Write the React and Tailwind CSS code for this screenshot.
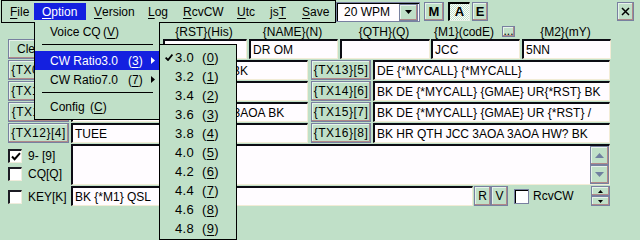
import React from 'react';

const raised =
  'border border-[#7880a0] shadow-[inset_-1px_-1px_0_#b08888,inset_1px_1px_0_#e6f3ea] bg-[#c0e0c8]';
const sunken =
  'bg-[#fffcff] border-t-2 border-l-2 border-r border-b border-t-[#0c0c14] border-l-[#0c0c14] border-r-[#f2ecd6] border-b-[#f2ecd6]';

const Btn = ({ className = '', children }) => (
  <div className={`${raised} flex shrink-0 items-center justify-center whitespace-nowrap ${className}`}>
    {children}
  </div>
);

const Field = ({ className = '', children }) => (
  <div className={`${sunken} flex shrink-0 items-center overflow-hidden whitespace-nowrap pl-[2px] ${className}`}>
    {children}
  </div>
);

const Check = ({ checked, className = '' }) => (
  <div
    className={`flex h-[14px] w-[14px] shrink-0 items-center justify-center border-t-2 border-l-2 border-r border-b border-t-[#1c1c24] border-l-[#1c1c24] border-r-[#f0ecdc] border-b-[#f0ecdc] bg-white ${className}`}
  >
    {checked && (
      <svg width="10" height="9" viewBox="0 0 10 9">
        <path d="M1 4.5L3.6 7.2L9 1.2" fill="none" stroke="#000" strokeWidth="2" />
      </svg>
    )}
  </div>
);

const U = ({ children }) => <span className="underline underline-offset-[2px]">{children}</span>;

const Tri = ({ dir = 'down', w = 7, h = 4, color = '#000' }) => {
  const pts =
    dir === 'down'
      ? `0,0 ${w},0 ${w / 2},${h}`
      : dir === 'up'
      ? `0,${h} ${w},${h} ${w / 2},0`
      : `0,0 ${w},${h / 2} 0,${h}`;
  return (
    <svg width={w} height={h} viewBox={`0 0 ${w} ${h}`}>
      <polygon points={pts} fill={color} />
    </svg>
  );
};

// [before, underlined, after, width class]
const menus = [
  ['', 'F', 'ile', 'w-[32px]'],
  ['', 'O', 'ption', 'w-[52px]', true],
  ['', 'V', 'ersion', 'w-[54px]'],
  ['', 'L', 'og', 'w-[35px]'],
  ['', 'R', 'cvCW', 'w-[54px]'],
  ['', 'U', 'tc', 'w-[33px]'],
  ['js', 'T', '', 'w-[32px]'],
  ['', 'S', 'ave', 'flex-1'],
];

const rows = [
  ['{TX09}[1]', '{*CALL} QSL DE {*MYCALL} BK', '{TX13}[5]', 'DE {*MYCALL} {*MYCALL}'],
  ['{TX10}[2]', 'QRZ?', '{TX14}[6]', 'BK DE {*MYCALL} {GMAE} UR{*RST} BK'],
  ['{TX11}[3]', 'R TU UR {*RST} {*RST} JCC 3AOA BK', '{TX15}[7]', 'BK DE {*MYCALL} {GMAE} UR {*RST} /'],
  ['{TX12}[4]', 'TUEE', '{TX16}[8]', 'BK HR QTH JCC 3AOA 3AOA HW? BK'],
];

const ratios = ['3.0', '3.2', '3.4', '3.6', '3.8', '4.0', '4.2', '4.4', '4.6', '4.8'];

export default function App() {
  return (
    <div className="relative h-[240px] w-[640px] overflow-hidden bg-[#c0e0c8] font-['Liberation_Sans',Arial,sans-serif] text-[12px] leading-[14px] text-black">
      {/* top bar */}
      <div className="flex h-[23px] items-start">
        <div className="ml-px flex h-[23px] w-[335px] shrink-0 border border-black pt-[2px]">
          {menus.map(([pre, u, post, w, active]) => (
            <div
              key={pre + u + post}
              className={`flex h-[17px] shrink-0 items-center pl-[8px] whitespace-nowrap ${w} ${
                active ? 'bg-[#1420e0] text-white' : ''
              }`}
            >
              {pre}
              <U>{u}</U>
              {post}
            </div>
          ))}
        </div>
        <div className="mt-[2px] flex h-[20px] w-[84px] shrink-0 items-center border border-[#7880a0] bg-[#fffcff] pl-[7px] shadow-[inset_1px_1px_0_#000]">
          <span>20 WPM</span>
          <Btn className="ml-auto mr-px h-[17px] w-[19px]">
            <Tri />
          </Btn>
        </div>
        <Btn className="ml-[4px] mt-[2px] h-[19px] w-[20px] text-[13px] font-bold">M</Btn>
        <div className="ml-[4px] mt-[2px] flex h-[19px] w-[22px] shrink-0 items-center justify-center border-t-2 border-l-2 border-r border-b border-t-black border-l-black border-r-[#e8f0e8] border-b-[#e8f0e8] bg-[image:repeating-conic-gradient(#ffffff_0_25%,#c0e0c8_0_50%)] bg-[length:2px_2px] text-[13px] font-bold">
          A
        </div>
        <Btn className="ml-[2px] mt-[2px] h-[19px] w-[16px] text-[13px] font-bold">E</Btn>
        <Btn className="ml-auto mr-[6px] mt-[2px] h-[19px] w-[17px]">
          <svg width="9" height="9" viewBox="0 0 9 9">
            <path d="M1 1L8 8M8 1L1 8" stroke="#000" strokeWidth="1.5" />
          </svg>
        </Btn>
      </div>

      {/* column labels */}
      <div className="flex h-[16px] pt-[2px] whitespace-nowrap">
        <div className="w-[71px] shrink-0" />
        <div className="w-[89px] shrink-0 text-center">{'{CALL}(C)'}</div>
        <div className="ml-[2px] w-[84px] shrink-0 text-center">{'{RST}(His)'}</div>
        <div className="ml-[2px] w-[89px] shrink-0 text-center">{'{NAME}(N)'}</div>
        <div className="ml-[2px] w-[90px] shrink-0 text-center">{'{QTH}(Q)'}</div>
        <div className="ml-px flex w-[89px] shrink-0 justify-center">
          <span>{'{M1}(codE)'}</span>
          <Btn className="ml-[8px] mt-px h-[11px] w-[13px] items-end leading-[10px]">...</Btn>
        </div>
        <div className="ml-[2px] w-[89px] shrink-0 text-center">{'{M2}(mY)'}</div>
      </div>

      {/* row 0 */}
      <div className="flex h-[21px]">
        <Btn className="ml-[8px] h-[20px] w-[61px] justify-start pl-[8px]">Clear</Btn>
        <Field className="ml-[2px] h-[20px] w-[89px]">JA1ZLO</Field>
        <Field className="ml-[3px] h-[20px] w-[84px]">5NN</Field>
        <Field className="ml-[2px] h-[20px] w-[89px]">DR OM</Field>
        <Field className="ml-[2px] h-[20px] w-[90px]" />
        <Field className="ml-px h-[20px] w-[89px]">JCC</Field>
        <Field className="ml-[2px] h-[20px] w-[89px]">5NN</Field>
      </div>

      {/* TX rows */}
      {rows.map(([b1, t1, b2, t2]) => (
        <div key={b1} className="flex h-[21px]">
          <Btn className="ml-[8px] h-[20px] w-[61px] tracking-[0.5px]">{b1}</Btn>
          <Field className="ml-[2px] h-[20px] w-[237px]">{t1}</Field>
          <Btn className="ml-[3px] h-[20px] w-[60px] tracking-[0.5px]">{b2}</Btn>
          <Field className="ml-[2px] h-[20px] w-[237px]">{t2}</Field>
        </div>
      ))}

      {/* log area */}
      <div className="flex h-[42px]">
        <div className="flex w-[71px] shrink-0 flex-col pl-[8px] pt-[5px]">
          <div className="flex items-center">
            <Check checked />
            <span className="ml-[6px]">9- [9]</span>
          </div>
          <div className="mt-[4px] flex items-center">
            <Check />
            <span className="ml-[6px]">CQ[Q]</span>
          </div>
        </div>
        <div className={`${sunken} flex h-[41px] w-[539px] shrink-0 justify-end`}>
          <div className="flex flex-col">
            <Btn className="h-[19px] w-[19px]">
              <Tri dir="up" w={9} h={5} color="#7080a0" />
            </Btn>
            <Btn className="h-[19px] w-[19px]">
              <Tri dir="down" w={9} h={5} color="#7080a0" />
            </Btn>
          </div>
        </div>
      </div>

      {/* bottom row */}
      <div className="flex h-[21px]">
        <div className="flex w-[71px] shrink-0 items-center pl-[8px]">
          <Check />
          <span className="ml-[6px]">KEY[K]</span>
        </div>
        <Field className="h-[20px] w-[402px]">{'BK {*M1} QSL'}</Field>
        <Btn className="ml-px h-[20px] w-[17px]">R</Btn>
        <Btn className="h-[20px] w-[17px]">V</Btn>
        <div className="ml-[6px] flex h-[20px] items-center">
          <div className="h-[15px] w-[15px] shrink-0 border border-[#7880a0] bg-white shadow-[inset_1px_1px_0_#000]" />
        </div>
        <div className="ml-[4px] flex h-[20px] w-[58px] shrink-0 items-center">RcvCW</div>
        <div className="flex h-[20px] w-[19px] shrink-0 flex-col justify-between">
          <Btn className="h-[10px] w-[19px]">
            <Tri dir="up" w={5} h={3} />
          </Btn>
          <Btn className="h-[10px] w-[19px]">
            <Tri dir="down" w={5} h={3} />
          </Btn>
        </div>
      </div>

      {/* Option menu */}
      <div className="absolute left-[34px] top-[22px] flex w-[126px] flex-col border-x border-b border-black bg-[#c0e0c8] pb-[2px] whitespace-pre">
        <div className="flex h-[20px] items-center pl-[15px]">
          <span className="inline-block w-[53px]">Voice CQ</span>
          <span>
            (<U>V</U>)
          </span>
        </div>
        <div className="h-[9px] pt-[2px]">
          <div className="ml-[7px] mr-[6px] h-px bg-black" />
        </div>
        <div className="flex h-[19px] items-center bg-[#1420e0] pl-[15px] text-white">
          <span className="inline-block w-[78px]">CW Ratio3.0</span>
          <span>
            (<U>3</U>)
          </span>
          <span className="ml-auto mr-[4px] flex">
            <Tri dir="right" w={4} h={7} color="#fff" />
          </span>
        </div>
        <div className="flex h-[19px] items-center pl-[15px]">
          <span className="inline-block w-[78px]">CW Ratio7.0</span>
          <span>
            (<U>7</U>)
          </span>
          <span className="ml-auto mr-[4px] flex">
            <Tri dir="right" w={4} h={7} />
          </span>
        </div>
        <div className="h-[8px] pt-[3px]">
          <div className="ml-[7px] mr-[6px] h-px bg-black" />
        </div>
        <div className="flex h-[20px] items-center pl-[15px]">
          <span className="inline-block w-[40px]">Config</span>
          <span>
            (<U>C</U>)
          </span>
        </div>
      </div>

      {/* CW ratio submenu */}
      <div className="absolute left-[159px] top-[44px] flex h-[196px] w-[78px] flex-col border border-black bg-[#c0e0c8] pt-[3px] text-[13px] tracking-[0.3px]">
        {ratios.map((r, i) => (
          <div key={r} className="flex h-[19px] shrink-0 items-center">
            <span className="flex w-[15px] justify-end pr-[2px]">
              {i === 0 && (
                <svg width="8" height="7" viewBox="0 0 8 7">
                  <path d="M0.6 3.6L3 6L7.4 0.6" fill="none" stroke="#000" strokeWidth="1.8" />
                </svg>
              )}
            </span>
            <span className="inline-block w-[27px]">{r}</span>
            <span>
              (<U>{i}</U>)
            </span>
          </div>
        ))}
      </div>
    </div>
  );
}
